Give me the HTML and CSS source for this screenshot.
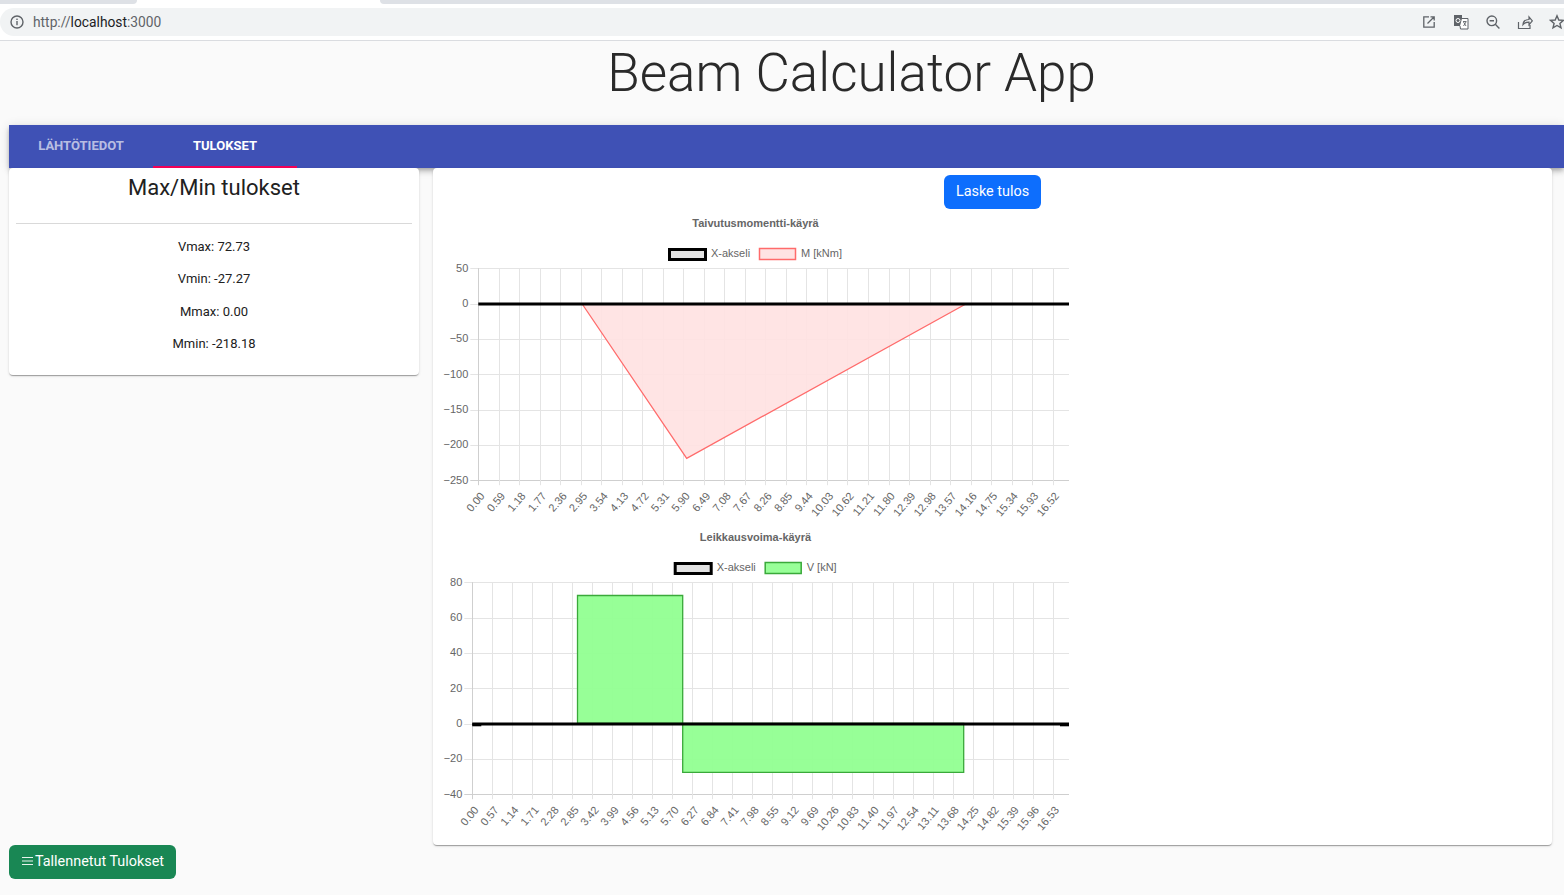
FILE: index.html
```html
<!DOCTYPE html>
<html lang="fi">
<head>
    <meta charset="UTF-8">
    <title>Beam Calculator App</title>
    <link rel="stylesheet" href="styles.css">
</head>
<body>

    <!-- Selaimen yläpalkki -->
    <div class="tabstrip">
        <div class="tab-bg tab-left"></div>
        <div class="tab-active"></div>
        <div class="tab-bg tab-right"></div>
    </div>
    <div class="toolbar">
        <div class="addressbar">
            <svg class="info-icon" width="14" height="14" viewBox="0 0 14 14">
                <circle cx="7" cy="7" r="6" fill="none" stroke="#5f6368" stroke-width="1.4"/>
                <rect x="6.3" y="6" width="1.4" height="4.2" fill="#5f6368"/>
                <rect x="6.3" y="3.6" width="1.4" height="1.4" fill="#5f6368"/>
            </svg>
            <span class="url"><span class="url-dim">http://</span>localhost<span class="url-dim">:3000</span></span>
            <div class="url-icons">
                <svg width="16" height="16" viewBox="0 0 16 16">
                    <path d="M8 2.8H2.8v10.4h10.4V8M6.5 9.5 13 3M9.5 2.8h3.7v3.7" fill="none" stroke="#5f6368" stroke-width="1.3"/>
                </svg>
                <svg width="16" height="16" viewBox="0 0 16 16">
                    <rect x="1" y="1" width="8" height="11" fill="#5f6368"/>
                    <path d="M9 4.5h6v10.5H7.5L7 12" fill="#fff" stroke="#5f6368" stroke-width="1"/>
                    <path d="M10 7.5h3.5M10.5 12l2.5-4M10.5 8l2.5 4" fill="none" stroke="#5f6368" stroke-width=".9"/>
                    <circle cx="5" cy="6.5" r="2" fill="none" stroke="#fff" stroke-width="1"/>
                </svg>
                <svg width="16" height="16" viewBox="0 0 16 16">
                    <circle cx="6.8" cy="6.8" r="4.8" fill="none" stroke="#5f6368" stroke-width="1.4"/>
                    <path d="M10.3 10.3 14.4 14.4M4.6 6.8h4.4" fill="none" stroke="#5f6368" stroke-width="1.4"/>
                </svg>
                <svg width="16" height="16" viewBox="0 0 16 16">
                    <path d="M1.5 8v6.5h11.5V11M6 10.5c.3-3 2.5-5 6-5V2.8l3.3 4-3.3 4V8.2c-2.6 0-4.6.6-6 2.3z" fill="none" stroke="#5f6368" stroke-width="1.2"/>
                </svg>
                <svg width="16" height="16" viewBox="0 0 16 16">
                    <path d="M8 1.8 9.8 6l4.6.4-3.5 3 1.1 4.5L8 11.5l-4 2.4 1.1-4.5-3.5-3L6.2 6z" fill="none" stroke="#5f6368" stroke-width="1.4"/>
                </svg>
            </div>
        </div>
    </div>

    <h1 class="app-title">Beam Calculator App</h1>

    <div class="tabbar">
        <div class="tabitem">Lähtötiedot</div>
        <div class="tabitem tabitem-selected">Tulokset</div>
    </div>

    <div class="content">
        <div class="left-col">
            <div class="card results">
                <h2>Max/Min tulokset</h2>
                <hr>
                <p>Vmax: 72.73</p>
                <p>Vmin: -27.27</p>
                <p>Mmax: 0.00</p>
                <p>Mmin: -218.18</p>
            </div>
            <button type="button" class="btn btn-saved">
                <svg width="11" height="8" viewBox="0 0 11 8">
                    <path d="M0 .5h11M0 4h11M0 7.5h11" stroke="#e8f3ed" stroke-width="1"/>
                </svg>Tallennetut Tulokset
            </button>
        </div>

        <div class="card charts">
            <div class="calc-row">
                <button type="button" class="btn btn-calc">Laske tulos</button>
            </div>
            <div id="momentChart"></div>
            <div id="shearChart"></div>
        </div>
    </div>

    <script src="charts.js"></script>
</body>
</html>
```

FILE: styles.css
```css
body {
    font-family: Roboto, Arial, sans-serif;
    background-color: #fafafa;
    margin: 0;
    color: #212121;
}
/* Selaimen palkki */
.tabstrip {
    display: flex;
    height: 8px;
    background-color: #fff;
}
.tab-bg {
    height: 4px;
    background-color: #dee1e6;
}
.tab-left {
    width: 137px;
    border-bottom-right-radius: 4px;
}
.tab-active {
    width: 243px;
}
.tab-right {
    flex: 1;
    border-bottom-left-radius: 4px;
}
.toolbar {
    background-color: #fff;
    height: 32px;
    border-bottom: 1px solid #dadce0;
}
.addressbar {
    display: flex;
    align-items: center;
    height: 28px;
    background-color: #f1f3f4;
    border-radius: 14px 0 0 14px;
    padding-left: 10px;
}
.info-icon {
    margin-right: 9px;
}
.url {
    font-size: 13.8px;
    color: #202124;
}
.url-dim {
    color: #5f6368;
}
.url-icons {
    display: flex;
    gap: 16px;
    margin-left: auto;
    margin-right: -1px;
}
/* Otsikko */
.app-title {
    font-weight: 300;
    font-size: 53px;
    line-height: 64px;
    height: 84px;
    margin: 0;
    padding: 0 0 0 139px;
    text-align: center;
    color: #2a2a2a;
}
/* Välilehdet */
.tabbar {
    display: flex;
    margin-left: 9px;
    height: 43px;
    background-color: #3f51b5;
    box-shadow: 0 2px 4px -1px rgba(0,0,0,0.2), 0 4px 5px 0 rgba(0,0,0,0.14), 0 1px 10px 0 rgba(0,0,0,0.12);
}
.tabitem {
    box-sizing: border-box;
    width: 144px;
    line-height: 41px;
    border-bottom: 2px solid transparent;
    text-align: center;
    text-transform: uppercase;
    font-size: 13px;
    font-weight: 700;
    color: rgba(255,255,255,0.65);
}
.tabitem-selected {
    color: #fff;
    border-bottom-color: #f50057;
}
/* Sisältö */
.content {
    display: flex;
    gap: 14px;
    margin-left: 9px;
    margin-right: 12px;
}
.left-col {
    display: flex;
    flex-direction: column;
    justify-content: space-between;
    align-items: flex-start;
    width: 410px;
    height: 711px;
}
.card {
    background-color: #fff;
    border-radius: 4px;
    box-shadow: 0 2px 1px -1px rgba(0,0,0,0.2), 0 1px 1px 0 rgba(0,0,0,0.14), 0 1px 3px 0 rgba(0,0,0,0.12);
}
.results {
    box-sizing: border-box;
    width: 100%;
    padding: 2px 7px 21px;
    text-align: center;
}
.results h2 {
    font-size: 22px;
    font-weight: 400;
    line-height: 36px;
    margin: 0 0 17px;
}
.results hr {
    border: 0;
    border-top: 1px solid #d9d9d9;
    margin: 0 0 13px;
}
.results p {
    font-size: 13px;
    line-height: 20px;
    margin: 0 0 12.4px;
}
.results p:last-child {
    margin-bottom: 0;
}
.charts {
    flex: 1;
    height: 677px;
    padding-left: 7px;
    box-sizing: border-box;
}
.calc-row {
    padding: 7px 0 3px 504px;
    height: 44px;
    box-sizing: border-box;
}
.btn {
    border: none;
    border-radius: 6px;
    color: #fff;
    font-family: Roboto, Arial, sans-serif;
    font-size: 14.4px;
    height: 34px;
    padding-bottom: 2px;
    cursor: pointer;
}
.btn-calc {
    width: 97px;
    background-color: #0d6efd;
}
.btn-saved {
    display: flex;
    align-items: center;
    gap: 2px;
    width: 167px;
    padding: 0 0 2px 13px;
    background-color: #198754;
}
.chart-svg {
    display: block;
}
.chart-svg text {
    font-family: "Liberation Sans", Arial, sans-serif;
    font-size: 11px;
    fill: #666;
}
.chart-svg .chart-title {
    font-weight: 700;
    font-size: 11px;
    text-anchor: middle;
}
.chart-svg .tick-y {
    text-anchor: end;
}
.chart-svg .tick-x {
    text-anchor: end;
}
.grid-line {
    stroke: #e4e4e4;
    stroke-width: 1;
}
.axis-line {
    stroke: #cfcfcf;
    stroke-width: 1;
}
.zero-line {
    stroke: #000;
    stroke-width: 3;
}
```

FILE: charts.js
```js
// Kaaviot piirretään SVG:nä datasta
const SVG_NS = 'http://www.w3.org/2000/svg';

function el(parent, name, attrs, text) {
    const node = document.createElementNS(SVG_NS, name);
    Object.keys(attrs).forEach(key => node.setAttribute(key, attrs[key]));
    if (text !== undefined) node.textContent = text;
    parent.appendChild(node);
    return node;
}

function drawChart(id, cfg) {
    const svg = el(document.getElementById(id), 'svg', { class: 'chart-svg', width: 640, height: 314 });
    const top = 56.2, bottom = 268.2, right = 629;
    const yPos = v => top + (cfg.yMax - v) / (cfg.yMax - cfg.yMin) * (bottom - top);
    const snap = v => Math.round(v) + 0.5;

    el(svg, 'text', { class: 'chart-title', x: 315.5, y: 15 }, cfg.title);

    // selite
    el(svg, 'rect', { x: cfg.legendX + 1.5, y: 37.5, width: 36, height: 10, fill: '#e2e2e2', stroke: '#000', 'stroke-width': 3 });
    el(svg, 'text', { x: cfg.legendX + 43, y: 45 }, 'X-akseli');
    el(svg, 'rect', { x: cfg.legendX + 91.5, y: 36.5, width: 36, height: 11, fill: cfg.fill, stroke: cfg.stroke, 'stroke-width': 1.5 });
    el(svg, 'text', { x: cfg.legendX + 133, y: 45 }, cfg.series);

    // y-asteikko
    for (let v = cfg.yMax; v >= cfg.yMin; v -= cfg.yStep) {
        const y = snap(yPos(v));
        el(svg, 'line', { class: v === cfg.yMin ? 'axis-line' : 'grid-line', x1: cfg.left - 8, x2: right, y1: y, y2: y });
        const label = v < 0 ? '\u2212' + Math.abs(v) : String(v);
        el(svg, 'text', { class: 'tick-y', x: cfg.left - 10, y: yPos(v) + 3.6 }, label);
    }

    // x-asteikko
    for (let i = 0; i < cfg.ticks; i++) {
        const x = cfg.left + i * cfg.tickGap;
        const label = (i * cfg.tickStep).toFixed(2);
        el(svg, 'line', { class: i === 0 ? 'axis-line' : 'grid-line', x1: snap(x), x2: snap(x), y1: top, y2: bottom + 5 });
        el(svg, 'text', { class: 'tick-x', x: x + 7, y: bottom + 16, transform: `rotate(-50 ${x + 7} ${bottom + 16})` }, label);
    }

    cfg.shapes.forEach(points => {
        el(svg, 'polygon', { points: points, fill: cfg.area, stroke: cfg.stroke, 'stroke-width': 1.3 });
    });

    if (cfg.zeroInset) {
        // viivan päät ovat hieman alempana
        el(svg, 'line', { class: 'zero-line', x1: cfg.left, x2: cfg.left + cfg.zeroInset, y1: 198.8, y2: 198.8 });
        el(svg, 'line', { class: 'zero-line', x1: right - cfg.zeroInset, x2: right, y1: 198.8, y2: 198.8 });
        el(svg, 'line', { class: 'zero-line', x1: cfg.left, x2: right, y1: 198, y2: 198 });
    } else {
        el(svg, 'line', { class: 'zero-line', x1: cfg.left, x2: right, y1: 92, y2: 92 });
    }
}

drawChart('momentChart', {
    title: 'Taivutusmomentti-käyrä',
    series: 'M [kNm]',
    legendX: 228,
    left: 38.3,
    tickGap: 20.51,
    tickStep: 0.59,
    ticks: 29,
    yMax: 50,
    yMin: -250,
    yStep: 50,
    fill: '#ffe3e3',
    area: 'rgba(255,226,226,0.92)',
    stroke: '#ff6b6b',
    shapes: ['142.2,92 246.7,246.3 525.8,92']
});

drawChart('shearChart', {
    title: 'Leikkausvoima-käyrä',
    series: 'V [kN]',
    legendX: 233.7,
    left: 32.3,
    tickGap: 20.01,
    tickStep: 0.57,
    ticks: 30,
    zeroInset: 9,
    yMax: 80,
    yMin: -40,
    yStep: 20,
    fill: '#98ff98',
    area: 'rgba(145,255,145,0.95)',
    stroke: '#3aa93a',
    shapes: ['137.5,197.5 137.5,69.5 242.7,69.5 242.7,197.5', '242.7,197.5 242.7,246.3 523.7,246.3 523.7,197.5']
});
```
